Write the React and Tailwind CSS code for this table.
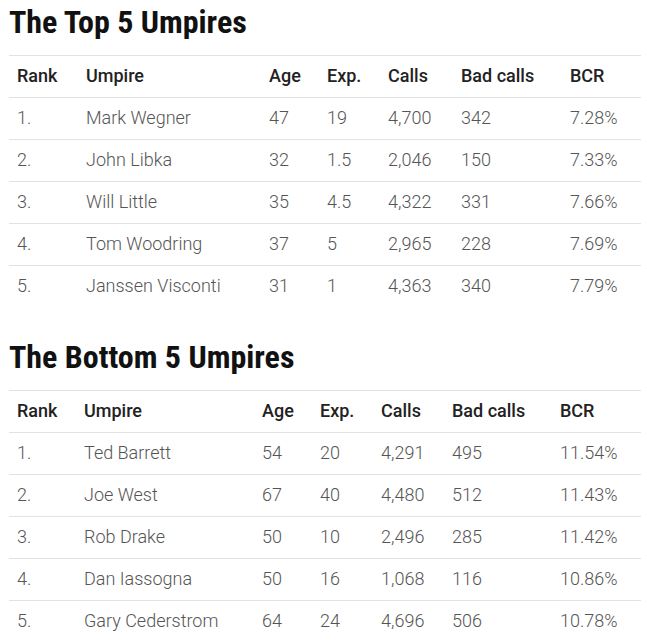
const top = [
  ["1.", "Mark Wegner", "47", "19", "4,700", "342", "7.28%"],
  ["2.", "John Libka", "32", "1.5", "2,046", "150", "7.33%"],
  ["3.", "Will Little", "35", "4.5", "4,322", "331", "7.66%"],
  ["4.", "Tom Woodring", "37", "5", "2,965", "228", "7.69%"],
  ["5.", "Janssen Visconti", "31", "1", "4,363", "340", "7.79%"],
];

const bottom = [
  ["1.", "Ted Barrett", "54", "20", "4,291", "495", "11.54%"],
  ["2.", "Joe West", "67", "40", "4,480", "512", "11.43%"],
  ["3.", "Rob Drake", "50", "10", "2,496", "285", "11.42%"],
  ["4.", "Dan Iassogna", "50", "16", "1,068", "116", "10.86%"],
  ["5.", "Gary Cederstrom", "64", "24", "4,696", "506", "10.78%"],
];

const heads = ["Rank", "Umpire", "Age", "Exp.", "Calls", "Bad calls", "BCR"];

const UmpireTable = ({ title, rows, widths }) => (
  <section>
    <h2 className="h-[53px] pt-[2px] text-[32px] leading-[36px] font-bold text-[#111] [font-family:'Roboto_Condensed',Roboto,sans-serif]">
      {title}
    </h2>
    <table className="w-[632px] table-fixed border-collapse text-[18px]">
      <colgroup>
        {widths.map((w, i) => (
          <col key={i} style={{ width: w }} />
        ))}
      </colgroup>
      <thead>
        <tr className="h-[42px] border-t border-[#e2e2e2]">
          {heads.map((h) => (
            <th key={h} className="px-2 pb-[2px] text-left font-medium text-[#222]">
              {h}
            </th>
          ))}
        </tr>
      </thead>
      <tbody>
        {rows.map((r) => (
          <tr key={r[0]} className="h-[42px] border-t border-[#e2e2e2]">
            {r.map((c, i) => (
              <td key={i} className="px-2 pb-[2px] font-light text-[#555]">
                {c}
              </td>
            ))}
          </tr>
        ))}
      </tbody>
    </table>
  </section>
);

export default function App() {
  return (
    <div className="flex flex-col gap-[29px] pl-[9px] pt-[2px] [font-family:Roboto,'Noto_Sans',sans-serif]">
      <UmpireTable title="The Top 5 Umpires" rows={top} widths={[69, 183, 58, 61, 73, 109, 79]} />
      <UmpireTable title="The Bottom 5 Umpires" rows={bottom} widths={[67, 178, 58, 61, 71, 108, 89]} />
    </div>
  );
}
